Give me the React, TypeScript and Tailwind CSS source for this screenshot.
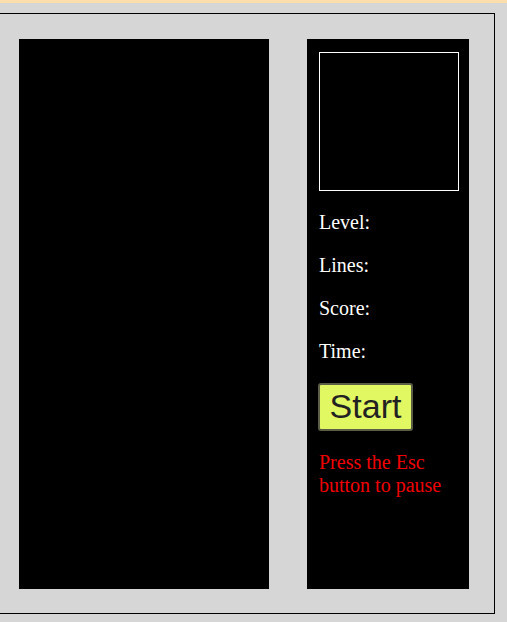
// Tetris page
const Stat = ({ label }: { label: string }) => (
  <p className="my-5 text-[20px] leading-[23px] text-white">{label}</p>
);

const App = () => {
  return (
    <div className="min-h-screen overflow-hidden bg-[#d6d6d6] font-['Liberation_Serif',serif]">
      <div className="h-[3px] bg-[#ffdead]" />
      <div className="ml-[-1px] mt-[10px] flex w-[496px] gap-[38px] border border-black pb-[24px] pl-[19px] pt-[25px]">
        {/* game board */}
        <div className="h-[550px] w-[250px] bg-black" />

        {/* side panel */}
        <div className="flex h-[550px] w-[162px] flex-col bg-black px-[12px] pt-[13px]">
          <div className="h-[139px] w-[140px] border border-white" />
          <Stat label="Level:" />
          <div className="-mt-5">
            <Stat label="Lines:" />
          </div>
          <div className="-mt-5">
            <Stat label="Score:" />
          </div>
          <div className="-mt-5">
            <Stat label="Time:" />
          </div>
          <button
            type="button"
            className="-ml-px flex h-[48px] w-[95px] items-center justify-center rounded-[3px] border-2 border-[#5b5e45] bg-[#e2f862] pb-[3px] font-['Liberation_Sans',sans-serif] text-[34px] leading-none text-[#222]"
          >
            Start
          </button>
          <p className="mt-5 text-[20px] leading-[23px] text-[#f00000]">
            Press the Esc button to pause
          </p>
        </div>
      </div>
    </div>
  );
};

export default App;
